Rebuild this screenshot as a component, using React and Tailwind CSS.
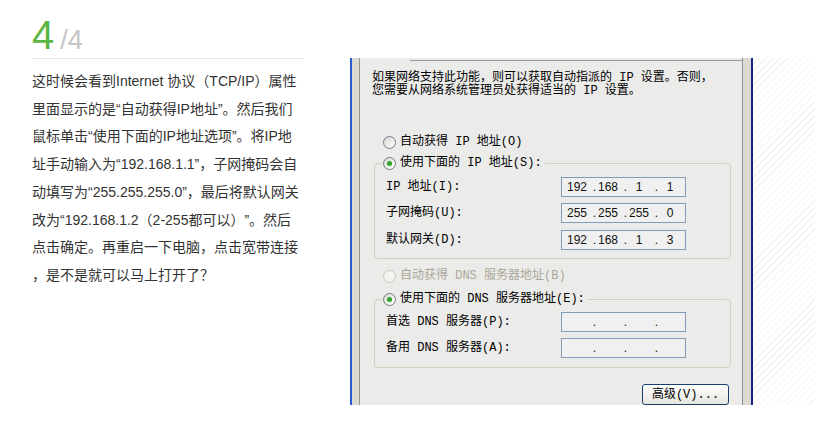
const lines = [
  "这时候会看到Internet 协议（TCP/IP）属性",
  "里面显示的是“自动获得IP地址”。然后我们",
  "鼠标单击“使用下面的IP地址选项”。将IP地",
  "址手动输入为“192.168.1.1”，子网掩码会自",
  "动填写为“255.255.255.0”，最后将默认网关",
  "改为“192.168.1.2（2-255都可以）”。然后",
  "点击确定。再重启一下电脑，点击宽带连接",
  "，是不是就可以马上打开了？",
];

function Radio({ checked, disabled }) {
  return (
    <span
      className={`flex h-[13px] w-[13px] shrink-0 items-center justify-center rounded-full border ${
        disabled
          ? "border-[#cac8bb] bg-[#f4f3ee]"
          : "border-[#6f7c86] bg-gradient-to-br from-[#d8d8d2] to-white"
      }`}
    >
      {checked && <span className="h-[5px] w-[5px] rounded-full bg-[#2da52d]" />}
    </span>
  );
}

function IpBox({ parts }) {
  return (
    <div className="flex h-[20px] w-[125px] items-center border border-[#7f9db9] bg-[#eff0ef] pl-[3px] font-['Liberation_Sans',sans-serif] text-[12px] text-[#111]">
      {parts.map((p, i) => (
        <div key={i} className="flex">
          <span className="w-[24px] text-center">{p}</span>
          {i < 3 && <span className="w-[7px] text-right">.</span>}
        </div>
      ))}
    </div>
  );
}

function Row({ label, parts, first }) {
  return (
    <div className={`flex items-center ${first}`}>
      <div className="w-[186px] pl-[11px]">{label}</div>
      <IpBox parts={parts} />
    </div>
  );
}

export default function App() {
  return (
    <div className="flex h-[422px] w-[815px] bg-white pl-[32px]">
      {/* article text */}
      <div className="w-[272px]">
        <div className="flex items-baseline pt-[15px] font-['Liberation_Sans',sans-serif] leading-none">
          <span className="text-[40px] text-[#5db544]">4</span>
          <span className="ml-[6px] text-[27px] text-[#c4c4c4]">/4</span>
        </div>
        <div className="mt-[3px] border-t border-[#e6e6e6]" />
        <div className="mt-[9px] font-['Liberation_Sans','Noto_Sans_CJK_SC',sans-serif] text-[14px] leading-[27.7px] text-[#333] [text-spacing-trim:space-all]">
          {lines.map((l, i) => (
            <div key={i} className="whitespace-nowrap">
              {l}
            </div>
          ))}
        </div>
      </div>

      {/* dialog screenshot */}
      <div className="ml-[46px] mt-[58px] flex h-[347px] w-[465px] overflow-hidden">
        <div className="w-[2px] bg-[#2b5bd4]" />
        <div className="w-[7px] bg-[#dcd9d0]" />
        <div className="flex w-[384px] flex-col border-x border-[#8f9597] bg-[#ebebea] font-['Liberation_Mono','Noto_Sans_CJK_SC',monospace] text-[12px] text-black">
          <div className="flex h-[3px]">
            <div className="w-[50px]" />
            <div className="flex-1 border-b border-[#919b9c]" />
          </div>
          <div className="mt-[11px] pl-[12px] leading-[13px] whitespace-nowrap">
            <div>如果网络支持此功能，则可以获取自动指派的 IP 设置。否则，</div>
            <div>您需要从网络系统管理员处获得适当的 IP 设置。</div>
          </div>

          <div className="mt-[36px] flex h-[16px] items-center gap-[4px] pl-[23px]">
            <Radio />
            <span>自动获得 IP 地址(O)</span>
          </div>

          <fieldset className="ml-[14px] mt-[5px] w-[357px] rounded-[4px] border border-[#d0d0bf] pb-[8px]">
            <legend className="ml-[7px] flex h-[16px] items-center gap-[4px] px-[1px] pr-[3px]">
              <Radio checked />
              <span>使用下面的 IP 地址(S):</span>
            </legend>
            <Row label="IP 地址(I):" parts={["192", "168", "1", "1"]} first="mt-[6px]" />
            <Row label="子网掩码(U):" parts={["255", "255", "255", "0"]} first="mt-[6px]" />
            <Row label="默认网关(D):" parts={["192", "168", "1", "3"]} first="mt-[7px]" />
          </fieldset>

          <div className="mt-[9px] flex h-[16px] items-center gap-[4px] pl-[23px] text-[#aca899]">
            <Radio disabled />
            <span>自动获得 DNS 服务器地址(B)</span>
          </div>

          <fieldset className="ml-[14px] mt-[7px] w-[357px] rounded-[4px] border border-[#d0d0bf] pb-[9px]">
            <legend className="ml-[7px] flex h-[16px] items-center gap-[4px] px-[1px] pr-[3px]">
              <Radio checked />
              <span>使用下面的 DNS 服务器地址(E):</span>
            </legend>
            <Row label="首选 DNS 服务器(P):" parts={["", "", "", ""]} first="mt-[5px]" />
            <Row label="备用 DNS 服务器(A):" parts={["", "", "", ""]} first="mt-[6px]" />
          </fieldset>

          <div className="mt-[16px] flex justify-end pr-[13px]">
            <div className="flex h-[21px] w-[87px] items-center justify-center rounded-[3px] border border-[#1b3f6b] bg-gradient-to-b from-white to-[#e6e5de]">
              高级(V)...
            </div>
          </div>
        </div>
        <div className="w-[8px] bg-[#dcd9d0]" />
        <div className="w-[2px] bg-[#15238a]" />
        <div className="flex-1 bg-[repeating-linear-gradient(135deg,#ffffff_0px,#ffffff_4px,#f2f2f2_4px,#f2f2f2_5px)]" />
      </div>
    </div>
  );
}
